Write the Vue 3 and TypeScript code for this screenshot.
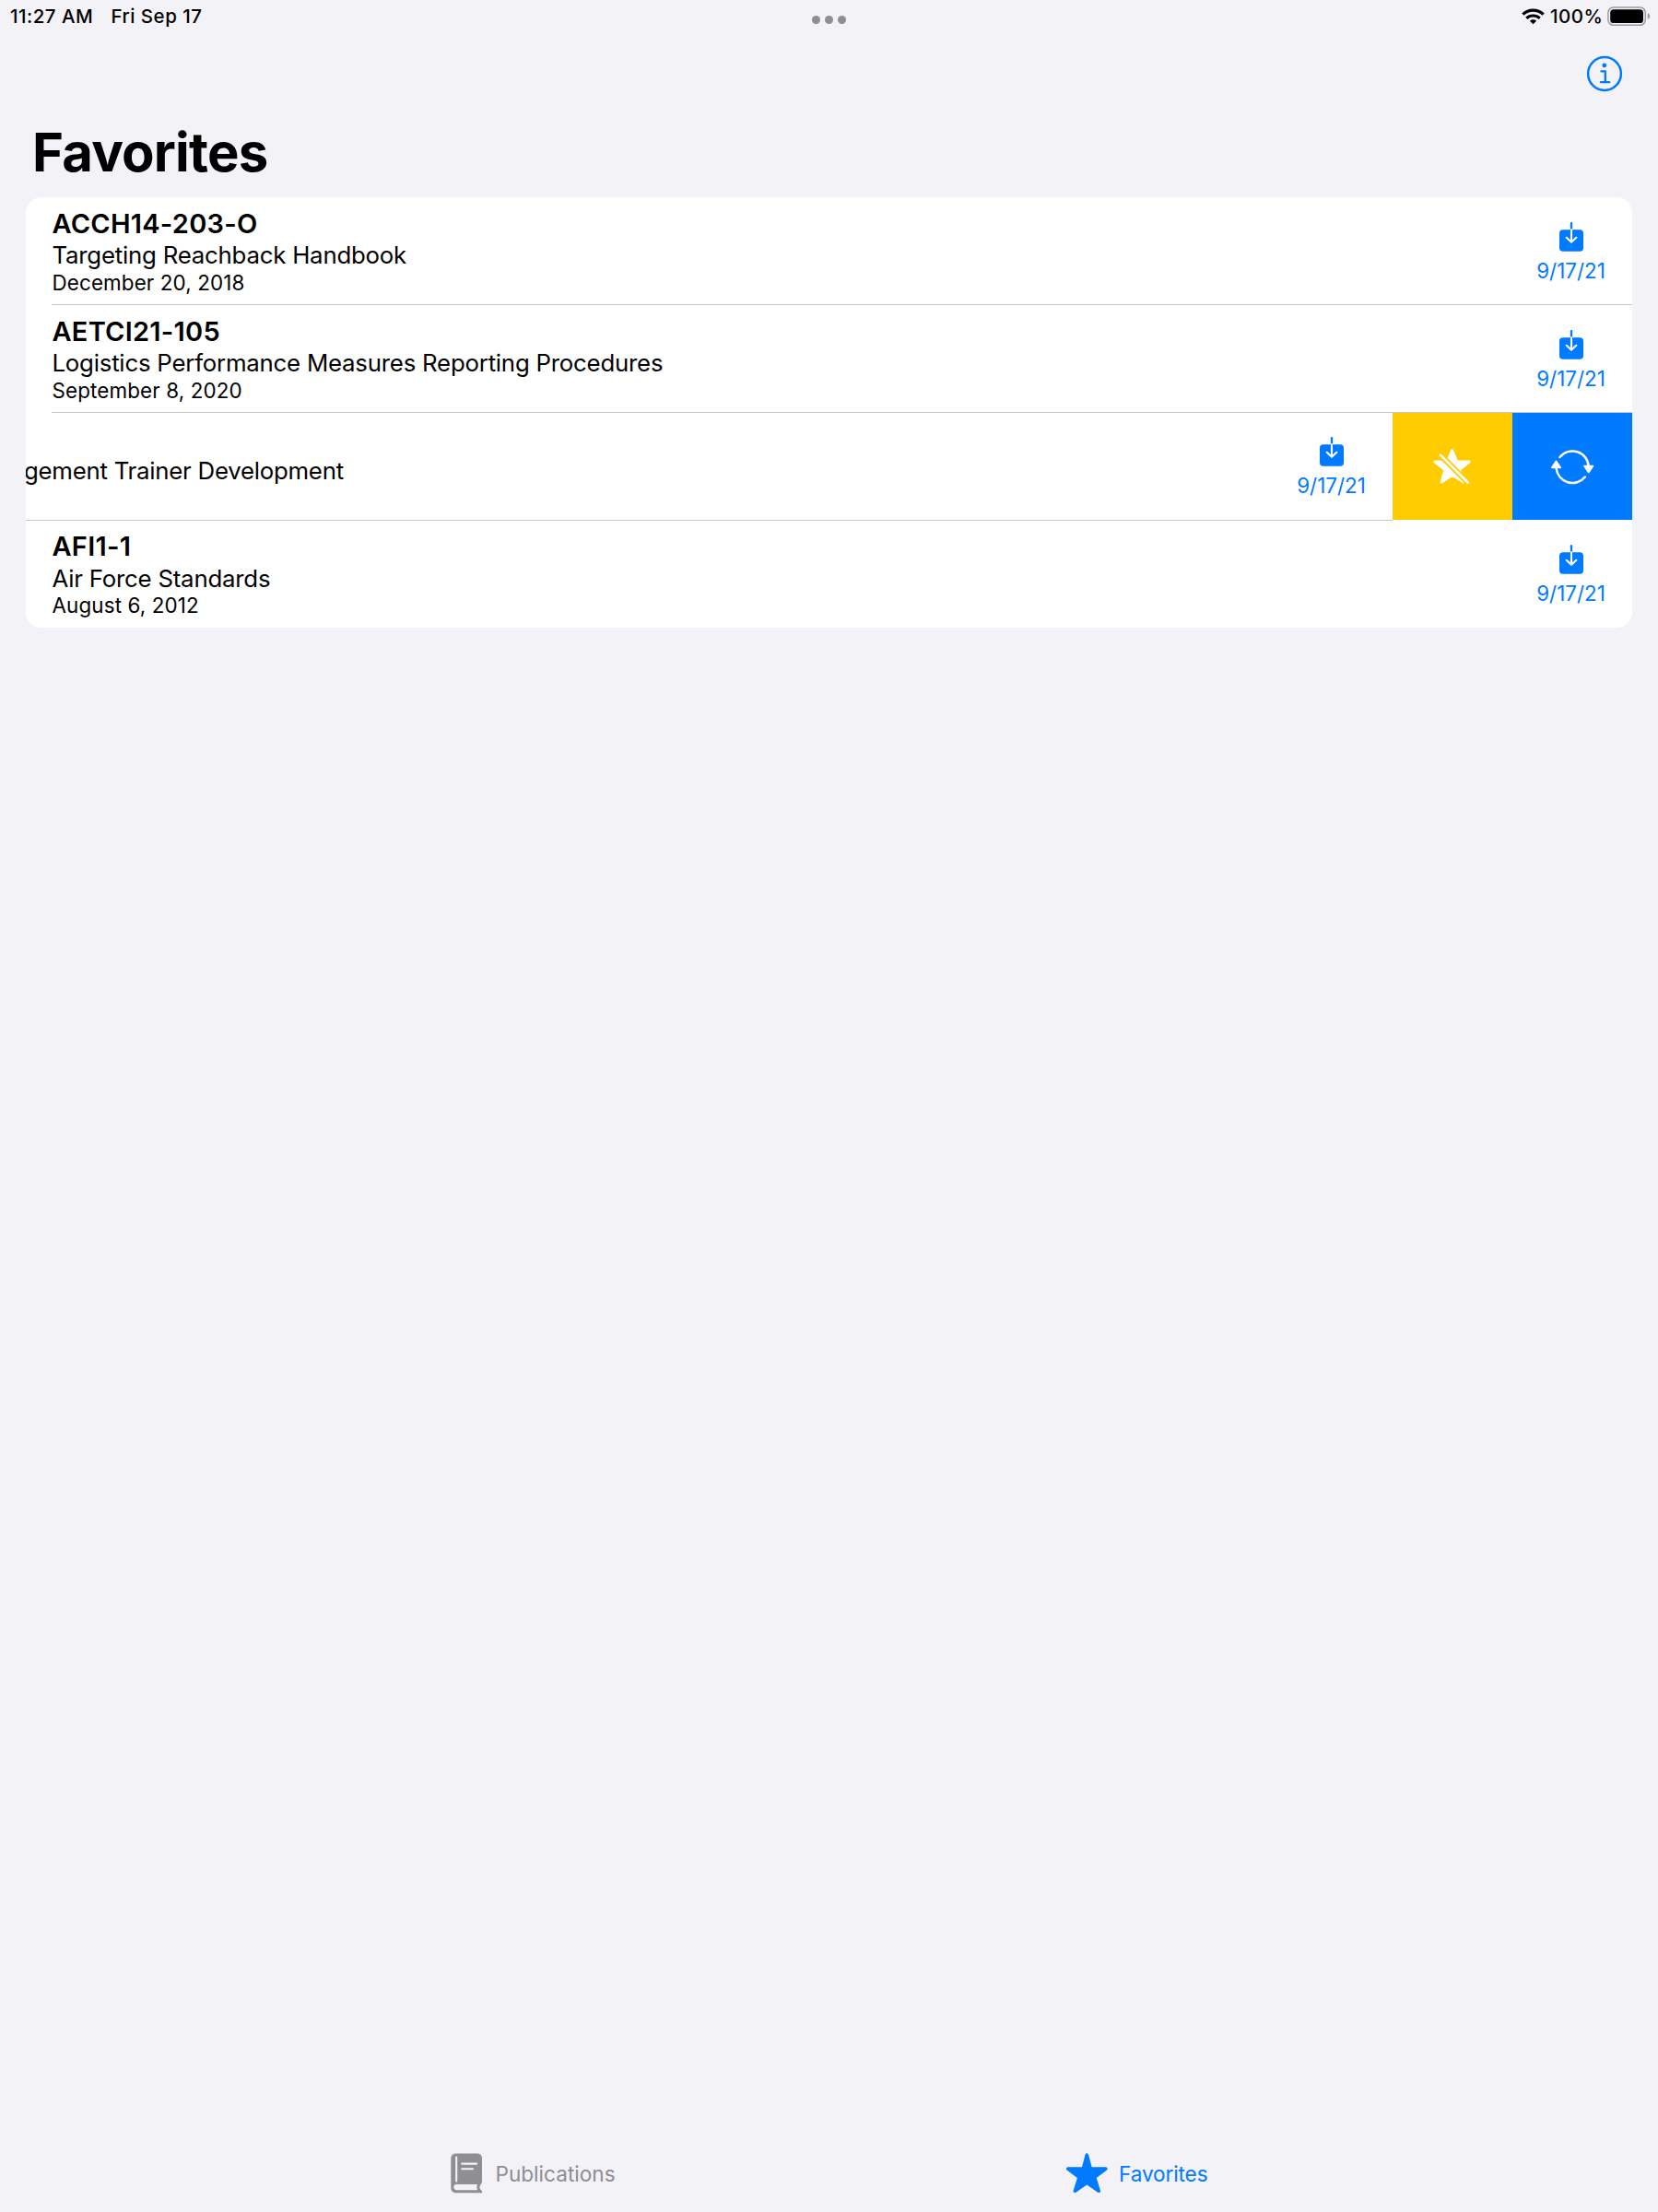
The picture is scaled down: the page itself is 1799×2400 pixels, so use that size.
<script setup lang="ts">
interface Publication {
  id: number
  code?: string
  title: string
  date?: string
  saved: string
  swiped?: boolean
}

const publications: Publication[] = [
  { id: 1, code: 'ACCH14-203-O', title: 'Targeting Reachback Handbook', date: 'December 20, 2018', saved: '9/17/21' },
  { id: 2, code: 'AETCI21-105', title: 'Logistics Performance Measures Reporting Procedures', date: 'September 8, 2020', saved: '9/17/21' },
  { id: 3, title: 'gement Trainer Development', saved: '9/17/21', swiped: true },
  { id: 4, code: 'AFI1-1', title: 'Air Force Standards', date: 'August 6, 2012', saved: '9/17/21' },
]
</script>

<template>
  <div class="screen">
    <header class="status">
      <div class="status-left">
        <span class="time">11:27 AM</span>
        <span class="day">Fri Sep 17</span>
      </div>
      <div class="dots"><i></i><i></i><i></i></div>
      <div class="status-right">
        <svg class="wifi" width="25" height="18" viewBox="0 0 25 18" fill="none" stroke="#000">
          <path d="M1.4 6.6A16 16 0 0 1 23.6 6.6" stroke-width="3.3" />
          <path d="M5.3 10.9A10.4 10.4 0 0 1 19.7 10.9" stroke-width="3.1" />
          <path d="M12.5 17.3L8.9 13.7A5.3 5.3 0 0 1 16.1 13.7Z" fill="#000" stroke="none" />
        </svg>
        <span class="percent">100%</span>
        <svg class="battery" width="47" height="22" viewBox="0 0 47 22">
          <rect x="0.9" y="0.9" width="40.4" height="19.4" rx="5.8" fill="none" stroke="#9b9b9f" stroke-width="1.5" />
          <rect x="3.2" y="3.2" width="35.8" height="14.8" rx="3.6" fill="#000" />
          <path d="M43.8 7.3C47 8.6 47 12.6 43.8 13.9Z" fill="#9b9b9f" />
        </svg>
      </div>
    </header>

    <nav class="toolbar">
      <svg width="40" height="40" viewBox="0 0 40 40" fill="none" stroke="#007aff">
        <circle cx="20" cy="20" r="17.9" stroke-width="2.5" />
        <circle cx="19.8" cy="10.9" r="2.4" fill="#007aff" stroke="none" />
        <path d="M16.4 17.3H20.8V29.2M15.9 29.2H25.2" stroke-width="2.3" stroke-linecap="round" stroke-linejoin="round" />
      </svg>
    </nav>

    <h1>Favorites</h1>

    <main class="card">
      <section v-for="pub in publications" :key="pub.id" class="row" :class="{ swiped: pub.swiped }">
        <div class="content">
          <div class="texts">
            <div class="code">{{ pub.code }}</div>
            <div class="title">{{ pub.title }}</div>
            <div class="date">{{ pub.date }}</div>
          </div>
          <div class="saved">
            <svg width="26" height="32" viewBox="0 0 26 32" fill="none">
              <rect x="0" y="8.3" width="26" height="23.4" rx="3.8" fill="#007aff" />
              <path d="M13 1.2V8.5" stroke="#007aff" stroke-width="2.3" stroke-linecap="round" />
              <path d="M13 8.3V21.5M7.7 16.8L13 21.8L18.3 16.8" stroke="#fff" stroke-width="2.1" stroke-linecap="round" stroke-linejoin="round" />
            </svg>
            <span>{{ pub.saved }}</span>
          </div>
        </div>
        <template v-if="pub.swiped">
          <button class="action unfavorite" aria-label="Unfavorite">
            <svg width="42" height="42" viewBox="0 0 42 42">
              <path d="M20.6 3.7L25.6 16H39.2L28.4 24.6L33 38.1L20.6 30.3L9.2 38.1L12.8 24.6L2 16H15.6Z" fill="#fff" stroke="#fff" stroke-width="3" stroke-linejoin="round" />
              <path d="M5.2 6L38.2 39" stroke="#ffcc00" stroke-width="6.2" />
              <path d="M7.9 8.7L37.7 38.5" stroke="#fff" stroke-width="2.6" stroke-linecap="round" />
            </svg>
          </button>
          <button class="action refresh" aria-label="Refresh">
            <svg width="48" height="42" viewBox="0 0 48 42">
              <g fill="none" stroke="#fff" stroke-width="2.5" stroke-linecap="round">
                <path d="M10.4 11A17.6 17.6 0 0 1 41.7 21" />
                <path d="M37.8 32.5A17.6 17.6 0 0 1 6.6 23" />
              </g>
              <path d="M36.9 20.6H46.5L41.7 27.7ZM1.7 22.4H11.3L6.5 15.3Z" fill="#fff" stroke="#fff" stroke-width="1.6" stroke-linejoin="round" />
            </svg>
          </button>
        </template>
      </section>
    </main>

    <footer class="tabs">
      <div class="tab publications">
        <svg width="35" height="44" viewBox="0 0 35 44">
          <path d="M6 .5H28.5Q34 .5 34 6V30.5Q34 33 32.2 34.5Q30.8 37.5 32 39.2L34 41.2V43.3H6Q.3 43.3 .3 37.5V6Q.3 .5 6 .5Z" fill="#8e8e93" />
          <path d="M6.2 4.6V30.6" stroke="#f2f2f7" stroke-width="2.1" stroke-linecap="round" />
          <path d="M12.2 11.6H28.1M12.2 17.2H24.1" stroke="#f2f2f7" stroke-width="2.1" stroke-linecap="round" />
          <path d="M6.3 34H29Q27.7 37 29 40.2H6.3Q3.3 40 3.3 37.1Q3.3 34.2 6.3 34Z" fill="#f2f2f7" />
        </svg>
        <span>Publications</span>
      </div>
      <div class="tab favorites">
        <svg width="45" height="44" viewBox="0 0 45 44">
          <path d="M22.3 2.2L26.2 17H42.9L30.7 26.4L35.2 41.2L22.3 32.2L9.4 41.2L13.9 26.4L1.7 17H18.4Z" fill="#007aff" stroke="#007aff" stroke-width="3.6" stroke-linejoin="round" />
        </svg>
        <span>Favorites</span>
      </div>
    </footer>
  </div>
</template>

<style>
body {
  background: #f2f2f7;
}
</style>

<style scoped>
.screen {
  width: 1799px;
  height: 2400px;
  box-sizing: border-box;
  display: flex;
  flex-direction: column;
  overflow: hidden;
  background: #f2f2f7;
  color: #000;
  font-family: Inter, 'Liberation Sans', sans-serif;
  white-space: nowrap;
}
.status {
  height: 36px;
  display: grid;
  grid-template-columns: 1fr auto 1fr;
  font-size: 20.5px;
  font-weight: 500;
  line-height: 35px;
  letter-spacing: 0.5px;
}
.status-left {
  display: flex;
  padding-left: 11px;
}
.time {
  width: 109.5px;
}
.dots {
  display: flex;
  gap: 5px;
  padding-top: 17px;
}
.dots i {
  width: 9px;
  height: 9px;
  border-radius: 50%;
  background: #8e8e93;
}
.status-right {
  display: flex;
  justify-content: flex-end;
  padding-right: 8.5px;
}
.wifi {
  margin-top: 8.7px;
}
.percent {
  width: 61px;
  padding-left: 6.5px;
  box-sizing: border-box;
  margin-right: 7px;
}
.battery {
  margin-top: 6.8px;
}
.toolbar {
  height: 94px;
  box-sizing: border-box;
  display: flex;
  justify-content: flex-end;
  padding: 23.7px 37.8px 0 0;
}
h1 {
  margin: 0;
  padding-left: 35px;
  height: 84px;
  font-size: 58px;
  font-weight: 700;
  line-height: 70px;
  letter-spacing: -0.8px;
}
.card {
  margin: 0 28px;
  background: #fff;
  border-radius: 17px;
  overflow: hidden;
}
.row {
  height: 117px;
  display: flex;
}
.row:last-child {
  height: 116px;
}
.content {
  flex: 1;
  min-width: 0;
  margin-left: 28px;
  box-sizing: border-box;
  display: flex;
  justify-content: space-between;
  padding-right: 29.5px;
  border-bottom: 1px solid #c6c6c8;
}
.row:last-child .content {
  border-bottom: 0;
}
.swiped .content {
  margin-left: 0;
}
.swiped .texts {
  padding-left: 0;
  margin-left: -2px;
}
.texts {
  padding-top: 10px;
  padding-left: 0.5px;
}
.row:last-child .texts {
  padding-top: 9px;
}
.code {
  height: 37px;
  font-size: 29px;
  font-weight: 600;
  line-height: 37px;
  letter-spacing: 0.24px;
}
.title {
  height: 32px;
  font-size: 25.8px;
  line-height: 32px;
  letter-spacing: -0.22px;
}
.swiped .title {
  letter-spacing: -0.25px;
}
.row:last-child .title {
  padding-top: 1px;
  height: 31px;
}
.date {
  font-size: 22.4px;
  line-height: 27px;
  letter-spacing: 0.13px;
}
.saved {
  width: 74px;
  display: flex;
  flex-direction: column;
  align-items: center;
  padding-top: 26.5px;
  color: #007aff;
  font-size: 22.4px;
  line-height: 27px;
}
.swiped .saved,
.row:last-child .saved {
  padding-top: 25.7px;
}
.saved span {
  margin-top: 7px;
}
.action {
  width: 130px;
  height: 116px;
  padding: 0;
  border: 0;
  display: flex;
  align-items: center;
  justify-content: center;
}
.unfavorite {
  background: #ffcc00;
}
.refresh {
  background: #007aff;
}
.tabs {
  margin-top: auto;
  height: 82px;
  display: flex;
  font-size: 22.6px;
  line-height: 28px;
}
.tab {
  display: flex;
  align-items: center;
}
.tab svg {
  margin-bottom: 2px;
}
.publications {
  width: 1157px;
  padding-left: 489px;
  box-sizing: border-box;
  color: #8e8e93;
  gap: 13.5px;
}
.favorites {
  color: #007aff;
  gap: 12px;
  letter-spacing: -0.12px;
}
</style>
